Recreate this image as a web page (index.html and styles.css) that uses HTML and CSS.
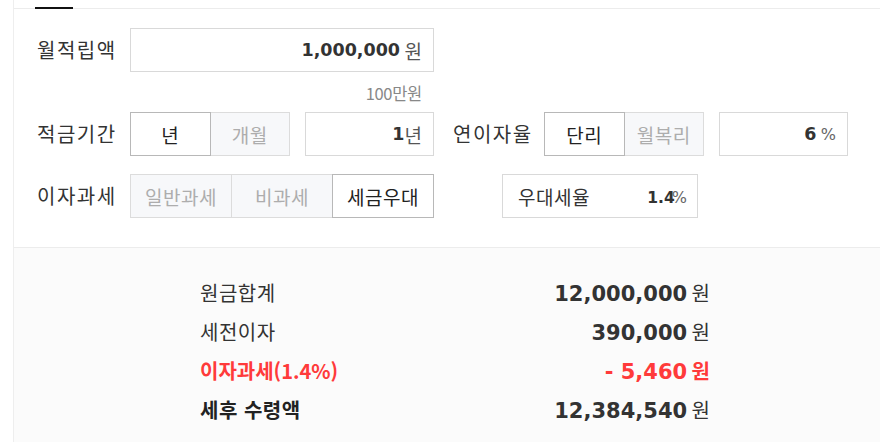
FILE: index.html
```html
<!DOCTYPE html>
<html lang="ko">
<head>
    <meta charset="UTF-8">
    <meta name="viewport" content="width=880">
    <title>적금 계산기</title>
    <link rel="stylesheet" href="styles.css">
</head>
<body>
    <div class="calc">
        <!-- tabs -->
        <div class="tabs">
            <span class="tab on"></span>
        </div>

        <!-- input form -->
        <div class="form">
            <div class="row">
                <span class="label">월적립액</span>
                <div class="field wide">
                    <b class="num">1,000,000</b>&nbsp;<span class="unit">원</span>
                </div>
            </div>
            <div class="hint">100만원</div>

            <div class="row">
                <span class="label">적금기간</span>
                <div class="seg two">
                    <span class="opt on">년</span>
                    <span class="opt">개월</span>
                </div>
                <div class="field short">
                    <b class="num">1</b><span class="unit">년</span>
                </div>
                <span class="label second">연이자율</span>
                <div class="seg two">
                    <span class="opt on">단리</span>
                    <span class="opt">월복리</span>
                </div>
                <div class="field short">
                    <b class="num">6</b>&nbsp;<span class="unit pct">%</span>
                </div>
            </div>

            <div class="row">
                <span class="label">이자과세</span>
                <div class="seg three">
                    <span class="opt">일반과세</span>
                    <span class="opt">비과세</span>
                    <span class="opt on">세금우대</span>
                </div>
                <div class="rate">
                    <span class="rate-name">우대세율</span>
                    <span class="rate-val"><b class="num">1.4</b><span class="unit pct">%</span></span>
                </div>
            </div>
        </div>

        <!-- result -->
        <div class="result">
            <ul class="sum">
                <li>
                    <span class="s-label">원금합계</span>
                    <span class="s-val"><b class="num">12,000,000</b> <span class="won">원</span></span>
                </li>
                <li>
                    <span class="s-label">세전이자</span>
                    <span class="s-val"><b class="num">390,000</b> <span class="won">원</span></span>
                </li>
                <li class="tax">
                    <span class="s-label">이자과세(1.4%)</span>
                    <span class="s-val"><b class="num">- 5,460</b> <span class="won">원</span></span>
                </li>
                <li class="total">
                    <span class="s-label">세후 수령액</span>
                    <span class="s-val"><b class="num">12,384,540</b> <span class="won">원</span></span>
                </li>
            </ul>
        </div>
    </div>
</body>
</html>
```

FILE: styles.css
```css
body {
    margin: 0;
    padding: 0;
    background-color: #fff;
    font-family: "Noto Sans CJK KR", "Noto Sans", sans-serif;
    color: #333;
}

.calc {
    margin-left: 13px;
    border-left: 1px solid #eeeeee;
    min-height: 442px;
    display: flex;
    flex-direction: column;
}

.tabs {
    height: 8px;
    border-bottom: 1px solid #ececec;
    padding-left: 21px;
    display: flex;
}

.tab.on {
    width: 38px;
    height: 7px;
    border-bottom: 2px solid #111;
}

.form {
    padding: 19px 0 29px 23px;
    border-bottom: 1px solid #ececec;
}

.row {
    display: flex;
    align-items: center;
    height: 44px;
}

.row + .row {
    margin-top: 18px;
}

.label {
    width: 93px;
    font-size: 20px;
    letter-spacing: 1.5px;
    color: #333;
    line-height: 44px;
}

.label.second {
    width: 91px;
    margin-left: 19px;
}

.num {
    font-family: "DejaVu Sans", sans-serif;
    font-weight: bold;
}

.field {
    box-sizing: border-box;
    height: 44px;
    border: 1px solid #d9d9d9;
    display: flex;
    align-items: center;
    justify-content: flex-end;
    padding-right: 11px;
    background: #fff;
}

.field .num {
    font-size: 17.5px;
    color: #333;
}

.field .unit {
    font-size: 19px;
    color: #555;
}

.unit.pct {
    font-family: "DejaVu Sans", sans-serif;
    font-size: 16px;
    color: #666;
}

.field.wide {
    width: 304px;
}

.field.short {
    width: 129px;
    margin-left: 15px;
}

.hint {
    width: 292px;
    margin: 10px 0 8px 93px;
    text-align: right;
    font-size: 16.5px;
    line-height: 22px;
    letter-spacing: -0.3px;
    color: #888;
}

.seg {
    display: flex;
    height: 44px;
}

.seg.two {
    width: 160px;
}

.seg.three {
    width: 304px;
}

.opt {
    flex: 1;
    box-sizing: border-box;
    border: 1px solid #dcdcdc;
    background: #f7f8fa;
    color: #adadad;
    font-size: 19px;
    letter-spacing: 0.5px;
    display: flex;
    align-items: center;
    justify-content: center;
}

.opt + .opt {
    margin-left: -1px;
}

.opt.on {
    background: #fff;
    color: #222;
    border-color: #b8b8b8;
    position: relative;
    z-index: 1;
}

.rate {
    box-sizing: border-box;
    width: 196px;
    height: 44px;
    margin-left: 68px;
    border: 1px solid #d9d9d9;
    display: flex;
    align-items: center;
    justify-content: space-between;
    padding: 0 10px 0 15px;
}

.rate-name {
    font-size: 19px;
    letter-spacing: 0.5px;
    color: #333;
}

.rate-val .num {
    font-size: 15.5px;
    color: #333;
}

.rate-val .pct {
    margin-left: -3px;
}

.result {
    flex: 1;
    background: #fbfbfb;
    padding: 25px 0 0 186px;
}

.sum {
    list-style: none;
    margin: 0;
    padding: 0;
    width: 510px;
}

.sum li {
    display: flex;
    justify-content: space-between;
    align-items: center;
    height: 39px;
}

.s-label {
    font-size: 20px;
    letter-spacing: 0.5px;
    color: #333;
}

.s-val .num {
    font-size: 21px;
    color: #333;
}

.won {
    font-size: 20px;
    color: #333;
}

.sum .tax .s-label,
.sum .tax .num,
.sum .tax .won {
    color: #ff3a3a;
    font-weight: bold;
}

.sum .tax .s-label {
    letter-spacing: 0;
}

.sum .total .s-label {
    font-weight: bold;
    color: #222;
}
```
